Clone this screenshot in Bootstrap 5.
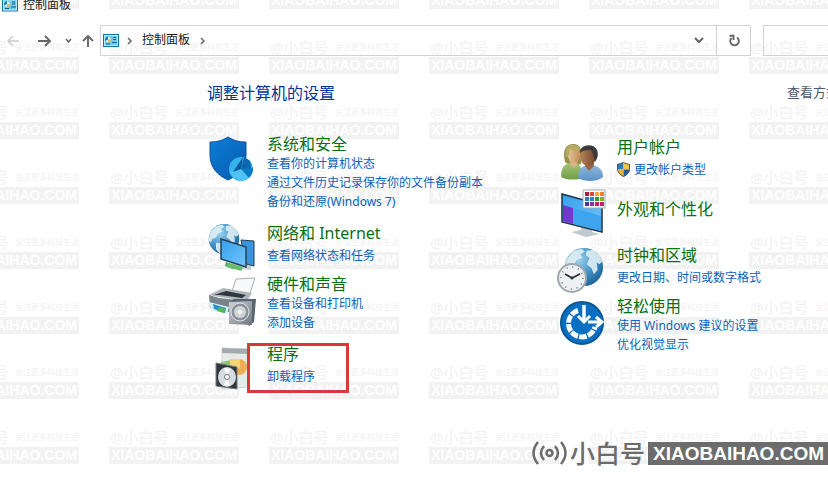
<!DOCTYPE html>
<html lang="zh-CN">
<head>
<meta charset="utf-8">
<meta name="viewport" content="width=device-width, initial-scale=1">
<title>控制面板</title>
<link rel="stylesheet" href="https://cdn.jsdelivr.net/npm/bootstrap@5.3.0/dist/css/bootstrap.min.css">
<style>
body { font: 12px/19px "Noto Sans", "Noto Sans CJK SC", sans-serif; color: #1a1a1a; background: #fff; min-height: 100vh; overflow-x: hidden; }
.page-shell { min-height: 100vh; isolation: isolate; }
.tile-layer { inset: 0; z-index: -1; display: grid; grid-template-columns: repeat(6, 160px); grid-auto-rows: 65px; margin: -28px 0 0 -51px; pointer-events: none; }
.tile-top { height: 20px; line-height: 20px; width: 130px; color: #f3f3f3; white-space: nowrap; font-weight: 500; padding-left: 1px; }
.tile-top b { font-size: 15px; font-weight: 500; }
.tile-top span { font-size: 8px; }
.tile-bar { width: 130px; height: 17px; background: #f2f2f2; color: #fff; font: 700 14px/17px "Liberation Sans", sans-serif; text-align: center; }
.title-bar { height: 9px; margin-bottom: 16px; padding-left: 2px; gap: 5px; }
.tool-row { height: 31px; }
.nav-set { width: 100px; padding: 0 6px; }
.plain-btn { border: 0; background: none; padding: 0; color: #666; line-height: 0; }
.plain-btn:disabled { color: #ccc; }
.address { border: 1px solid #d2d2d2; padding-left: 2px; }
.crumb { color: #1a1a1a; line-height: 19px; padding: 0 10px 2px; }
.reload { width: 34px; border-left: 1px solid #d2d2d2; }
.find-box { width: 65px; border: 1px solid #d2d2d2; border-right: 0; margin-left: 12px; background: none; border-radius: 0; }
.content-pad { padding-left: 25%; }
.page-head { height: 24px; margin-top: 25px; margin-bottom: 30px; line-height: 24px; }
.page-head h1 { font-size: 16px; line-height: 24px; color: #003399; }
.view-by { width: 41px; font-size: 13px; line-height: 22px; color: #4b5a6c; overflow: hidden; white-space: nowrap; }
.cats { display: grid; grid-template-columns: 350px 1fr; }
.cat { gap: 10px; margin-bottom: 3px; }
.cat.tall { margin-bottom: 13px; }
.cat > svg { width: 50px; height: 48px; flex: none; }
.cat h2 { font-size: 16px; line-height: 19px; margin: 0; white-space: nowrap; }
.cat h2 a { color: #0b7010; }
.cat a { text-decoration: none; color: #0b62b8; white-space: nowrap; }
.single h2 { margin-bottom: 3px; }
.second-col { padding-top: 3px; }
.look { margin-bottom: 9px; }
.focus-frame { left: 40px; top: -2px; width: 102px; height: 50px; border: 3px solid #d9383c; pointer-events: none; }
.brand { right: 0; bottom: 12px; color: #6c6c6c; }
.brand-cn { font-size: 25px; line-height: 23px; font-weight: 500; margin: 0 3px 0 3px; }
.brand-url { background: #6c6c6c; color: #fff; font: 700 19px/23px "Liberation Sans", sans-serif; padding: 0 4px 0 5px; }
</style>
<script src="https://cdn.jsdelivr.net/npm/bootstrap@5.3.0/dist/js/bootstrap.bundle.min.js"></script>
</head>
<body>
<svg width="0" height="0" class="position-absolute" aria-hidden="true">
  <defs>
    <linearGradient id="blue" x1="0" y1="0" x2="1" y2="1"><stop stop-color="#0b80d8"/><stop offset="1" stop-color="#0757ae"/></linearGradient>
    <linearGradient id="sky" x1="0" y1="0" x2="1" y2="1"><stop stop-color="#36a0ee"/><stop offset="1" stop-color="#72c5fa"/></linearGradient>
    <radialGradient id="ball" cx=".35" cy=".3" r=".8"><stop stop-color="#9fd3ef"/><stop offset=".55" stop-color="#4292c5"/><stop offset="1" stop-color="#175b91"/></radialGradient>
    <linearGradient id="metal" x1="0" y1="0" x2="1" y2="1"><stop stop-color="#d0d4d8"/><stop offset="1" stop-color="#6e757d"/></linearGradient>
    <linearGradient id="skin" x1="0" y1="0" x2="1" y2="0"><stop stop-color="#e9c596"/><stop offset="1" stop-color="#c38c5c"/></linearGradient>
    <linearGradient id="face" x1="0" y1="0" x2="1" y2="0"><stop stop-color="#b98257"/><stop offset="1" stop-color="#6d4630"/></linearGradient>
    <linearGradient id="shirt" x1="0" y1="0" x2="0" y2="1"><stop stop-color="#8db9df"/><stop offset="1" stop-color="#5d92c6"/></linearGradient>
    <linearGradient id="green" x1="0" y1="0" x2="0" y2="1"><stop stop-color="#a5c477"/><stop offset="1" stop-color="#6f9f45"/></linearGradient>
    <symbol id="panel" viewBox="0 0 16 13"><rect x=".5" y=".5" width="15" height="12" fill="#6fc8ee" stroke="#16729f"/><rect x="1.5" y="1.5" width="13" height="10" fill="none" stroke="#b9e7fa"/><circle cx="5" cy="5.500" r="2.700" fill="#e9f7fb"/><path d="M5 5.500V2.500A3 3 0 0 0 2.500 7z" fill="#167aad"/><path d="M5 5.500h3A3 3 0 0 1 5 8.500z" fill="#e3b54d"/><path d="M10 3.500h3M10 5.500h3M9 8.500h5M3 10h4" stroke="#175f88"/></symbol>
    <symbol id="globe" viewBox="0 0 44 44"><circle cx="22" cy="22" r="21" fill="url(#ball)"/><path d="M4 12L10 5l9-3 4 3-5 3 2 4-6 2-3 6-5 2-2 5-3-3 1-7zM25 4l7-1 7 6 3 7-3 3-3-2 1 8-4 5-3-7-5-4 3-7-4-3zM11 27l7 1 4 5-4 5-2 4-5-6z" fill="#e3f0f5" opacity=".88"/></symbol>
  </defs>
</svg>
<div class="page-shell position-relative overflow-hidden">
  <div class="tile-layer position-absolute" id="tiles" aria-hidden="true"></div>

  <header>
    <div class="title-bar d-flex align-items-center">
      <svg class="flex-shrink-0" width="16" height="14"><use href="#panel"/></svg><span>控制面板</span>
    </div>
    <nav class="tool-row d-flex align-items-stretch" aria-label="导航">
      <div class="nav-set d-flex align-items-center justify-content-between flex-shrink-0">
        <button class="plain-btn" disabled aria-label="后退"><svg width="14" height="12" fill="none" stroke="currentColor" stroke-width="1.500"><path d="M13 6H2M7 1L2 6l5 5"/></svg></button>
        <button class="plain-btn ms-2" aria-label="前进"><svg width="14" height="12" fill="none" stroke="currentColor" stroke-width="1.900"><path d="M0 6h12M7 1l5 5-5 5"/></svg></button>
        <button class="plain-btn ms-1" aria-label="最近位置"><svg width="7" height="6" fill="none" stroke="currentColor" stroke-width="1.500"><path d="M1 1l2.500 3L6 1"/></svg></button>
        <button class="plain-btn" aria-label="上移"><svg width="12" height="13" fill="none" stroke="currentColor" stroke-width="1.900"><path d="M6 13V2M1 7l5-5 5 5"/></svg></button>
      </div>
      <div class="address d-flex align-items-center flex-grow-1">
        <svg width="16" height="13"><use href="#panel"/></svg>
        <button class="plain-btn ms-2" aria-label="展开"><svg width="5" height="8" fill="none" stroke="currentColor" stroke-width="1.500"><path d="M1 1l3 3-3 3"/></svg></button>
        <button class="plain-btn crumb">控制面板</button>
        <button class="plain-btn" aria-label="展开控制面板"><svg width="5" height="8" fill="none" stroke="currentColor" stroke-width="1.500"><path d="M1 1l3 3-3 3"/></svg></button>
        <button class="plain-btn ms-auto me-2 pe-1" aria-label="以前的位置"><svg width="10" height="7" fill="none" stroke="currentColor" stroke-width="2"><path d="M1 1l4 4 4-4"/></svg></button>
        <button class="plain-btn reload align-self-stretch" aria-label="刷新"><svg width="12" height="13" fill="none" stroke="currentColor" stroke-width="1.900"><path d="M9 3.500A4.300 4.300 0 1 1 3.500 4M1.500 1.800h4v4.200"/></svg></button>
      </div>
      <input class="find-box flex-shrink-0" type="search" aria-label="搜索控制面板">
    </nav>
  </header>

  <main class="content-pad">
    <div class="page-head d-flex justify-content-between">
      <h1 class="m-0 fw-normal">调整计算机的设置</h1>
      <div class="view-by">查看方式</div>
    </div>
    <div class="cats">
      <div>
        <section class="cat tall d-flex">
          <svg viewBox="0 0 50 48"><path d="M3 7c8 0 13-2 18-5 5 3 10 5 18 5v13c0 12-7 20-18 25C10 40 3 32 3 20z" fill="url(#blue)" stroke="#07549c"/><circle cx="34" cy="34" r="12" fill="#35b3ea"/><path d="M34 34l3-12 6 4 2 12z" fill="#0c67ae"/><path d="M34 34l12-1a12 12 0 0 1-6 11z" fill="#087bc4"/><path d="M23 36l11-2 8 9a12 12 0 0 1-19-7z" fill="#4fc3f3"/><path d="M34 34l-8 3 10-15z" fill="#0a5aa0"/></svg>
          <div><h2 class="fw-normal"><a href="#">系统和安全</a></h2><a class="d-block" href="#">查看你的计算机状态</a><a class="d-block" href="#">通过文件历史记录保存你的文件备份副本</a><a class="d-block" href="#">备份和还原(Windows 7)</a></div>
        </section>
        <section class="cat single d-flex">
          <svg viewBox="0 0 50 48"><use href="#globe" x="1" y="-1" width="32" height="32"/><path d="M24 39l20 3v4l-18-2z" fill="#c3cdd2"/><path d="M19 38l9 3-2 4-8-3z" fill="#3da75a"/><path d="M20 41l15 4" stroke="#62c06b" stroke-width="4"/><path d="M34 16l13 1v25l-8-2z" fill="#3796dd" stroke="#263d51"/><path d="M14 15l25 8v20l-25-8z" fill="url(#sky)" stroke="#24445b" stroke-width="1.500"/></svg>
          <div><h2 class="fw-normal"><a href="#">网络和 Internet</a></h2><a class="d-block" href="#">查看网络状态和任务</a></div>
        </section>
        <section class="cat tall d-flex">
          <svg class="overflow-visible" viewBox="0 0 50 48"><path d="M25 16L29 4l19-1-6 18z" fill="#f8f9fa" stroke="#a8adb4"/><path d="M2 20l14-7 29 5-5 8-28-4z" fill="#aeb5bc"/><path d="M2 20l10 3 28 3v15L3 33z" fill="#7b838a"/><path d="M7 20l12-4 20 4-4 3-22-3z" fill="#303840"/><path d="M2 27l20 5-2 7L4 35z" fill="#d6f0fa"/><path d="M6 29l13 4-1 5-11-4z" fill="#2594c8"/><path d="M12 32l7 2-2 4-7-2z" fill="#58b756"/><path d="M22 27l5-3h22l-2 23-5 4z" fill="#566473"/><path d="M22 27l23-1v24l-23-1z" fill="url(#metal)"/><ellipse cx="33" cy="37" rx="9" ry="9" fill="#8b9299" stroke="#dfe3e6"/><ellipse cx="33" cy="37" rx="6" ry="6" fill="#d1d5d8"/><circle cx="33" cy="37" r="2" fill="#f7f7f7"/></svg>
          <div><h2 class="fw-normal"><a href="#">硬件和声音</a></h2><a class="d-block" href="#">查看设备和打印机</a><a class="d-block" href="#">添加设备</a></div>
        </section>
        <section class="cat single d-flex position-relative">
          <svg viewBox="0 0 50 48"><path d="M15 3l27 1v38l-27 2z" fill="#e7eaeb" stroke="#d0d6d8"/><path d="M15 3l27 1v5l-27-1z" fill="#a5aaae"/><path d="M14 17l10-2 1 15H14z" fill="#91c576"/><circle cx="32" cy="22" r="8" fill="#efad54"/><path d="M23 14h10v9H23z" fill="#f2d477"/><path d="M9 18l21 4v22L9 41z" fill="#30373c" stroke="#737b80"/><ellipse cx="20" cy="32" rx="9" ry="10" fill="#d5dbde"/><path d="M20 32l-3-9 6 1zM20 32l3 9-6-1z" fill="#fff"/><circle cx="20" cy="32" r="2.500" fill="#fff" stroke="#71787c"/></svg>
          <div><h2 class="fw-normal"><a href="#">程序</a></h2><a class="d-block" href="#">卸载程序</a></div>
          <div class="focus-frame position-absolute" aria-hidden="true"></div>
        </section>
      </div>
      <div class="second-col">
        <section class="cat single d-flex">
          <svg viewBox="0 0 50 48"><path d="M8 24C5 12 9 6 16 6c8 0 10 6 8 20l-9 3z" fill="#96904a"/><ellipse cx="17" cy="17" rx="6" ry="9" fill="url(#skin)"/><path d="M9 20C7 10 11 6 17 7c4 0 6 3 6 6-5 0-8 0-10-2 0 4-1 7-4 9z" fill="#b5ab62"/><path d="M4 39c0-10 4-14 11-14 6 0 9 3 10 8l-2 8c-7 1-14 1-19-2z" fill="url(#green)"/><path d="M12 25l5 5 4-4-3-2z" fill="#dcb487"/><path d="M21 40c0-9 4-13 12-13 9 0 13 5 13 12-6 5-18 5-25 1z" fill="url(#shirt)"/><path d="M29 25h8v3l-5 5-4-5z" fill="#99663f"/><ellipse cx="31" cy="18" rx="8" ry="10" fill="url(#face)"/><path d="M23 15C22 7 36 4 40 12c2 5 0 9-2 12-1-5-2-9-4-12-4 0-8 0-11 3z" fill="#3d3b39"/></svg>
          <div><h2 class="fw-normal"><a href="#">用户帐户</a></h2><a class="d-flex align-items-center" href="#"><svg class="me-1" width="13" height="15" viewBox="0 0 14 16"><path d="M0 2q4 0 7-2v8H0z" fill="#287cc1"/><path d="M7 0q3 2 7 2v6H7z" fill="#f4c544"/><path d="M0 8h7v8Q1 13 0 8z" fill="#eeb432"/><path d="M7 8h7q-1 5-7 8z" fill="#205c9d"/><path d="M.5 2.500Q4 2 7 .5q3 1.500 6.500 2V8q-1 5-6.500 7.500Q1.500 13 .5 8z" fill="none" stroke="#4b5158"/></svg>更改帐户类型</a></div>
        </section>
        <section class="cat look d-flex align-items-center">
          <svg viewBox="0 0 50 48"><path d="M24 38l11 3v2l8 2-14 3-15-5 10-2z" fill="#bfc9ce"/><path d="M5 5l40 11v27L5 33z" fill="url(#sky)" stroke="#1d3444" stroke-width="1.500"/><path d="M6 16l10 3v16L6 32z" fill="#7438d0"/><path d="M16 19l28 8v15l-28-7z" fill="#3fa4ee"/><path d="M26 1h22v18H26z" fill="#fff" stroke="#a0abb1"/><path d="M28 3h4v4h-4z" fill="#b31945"/><path d="M33 3h4v4h-4z" fill="#d74b3f"/><path d="M38 3h4v4h-4z" fill="#f2ad39"/><path d="M43 3h4v4h-4z" fill="#e98327"/><path d="M28 8h4v4h-4z" fill="#2387a6"/><path d="M33 8h4v4h-4z" fill="#1e8ac5"/><path d="M38 8h4v4h-4z" fill="#389641"/><path d="M43 8h4v4h-4z" fill="#78b72b"/><path d="M28 13h4v4h-4z" fill="#54309b"/><path d="M33 13h4v4h-4z" fill="#8a3299"/><path d="M38 13h4v4h-4zM43 13h4v4h-4z" fill="#c52065"/></svg>
          <div class="pb-2"><h2 class="fw-normal m-0"><a href="#">外观和个性化</a></h2></div>
        </section>
        <section class="cat single d-flex">
          <svg viewBox="0 0 50 48"><use href="#globe" x="7" y="1" width="40" height="40"/><circle cx="15" cy="32" r="14" fill="#eef1f3" stroke="#a0a7ad" stroke-width="2"/><circle cx="15" cy="32" r="11" fill="none" stroke="#616c76" stroke-width="1.500" stroke-dasharray="1 4.760"/><path d="M8 28l7 4 8-4" fill="none" stroke="#26313c" stroke-width="1.700"/><circle cx="15" cy="32" r="1.500" fill="#26313c"/></svg>
          <div><h2 class="fw-normal"><a href="#">时钟和区域</a></h2><a class="d-block" href="#">更改日期、时间或数字格式</a></div>
        </section>
        <section class="cat tall d-flex">
          <svg viewBox="0 0 50 48"><circle cx="25" cy="26" r="21" fill="#0870c2" stroke="#075795" stroke-width="2"/><path d="M21 13.500A13.500 13.500 0 1 0 38 30" fill="none" stroke="#fff" stroke-width="5" stroke-dasharray="7.500 1.300"/><path d="M27 8v16" stroke="#fff" stroke-width="3.500"/><path d="M21 19l6 6 6-6M31 25h13M39 20l6 5-6 5" fill="none" stroke="#fff" stroke-width="3"/></svg>
          <div><h2 class="fw-normal"><a href="#">轻松使用</a></h2><a class="d-block" href="#">使用 Windows 建议的设置</a><a class="d-block" href="#">优化视觉显示</a></div>
        </section>
      </div>
    </div>
  </main>

  <div class="brand position-absolute d-flex align-items-center">
    <svg width="35" height="24" viewBox="0 0 35 24" fill="none" stroke="currentColor" stroke-width="2.500"><circle cx="17.500" cy="12" r="3"/><path d="M12 5q-6 7 0 14M23 5q6 7 0 14M6 1q-9 11 0 22M29 1q9 11 0 22"/></svg>
    <span class="brand-cn">小白号</span><span class="brand-url">XIAOBAIHAO.COM</span>
  </div>
</div>
<script>
  // Repeats the background label over the whole page area.
  const layer = document.getElementById('tiles');
  for (let i = 0; i < 48; i++) {
    const tile = document.createElement('div');
    tile.innerHTML = '<div class="tile-top d-flex justify-content-between align-items-center"><b>@小白号</b><span>关注更多科技生活</span></div><div class="tile-bar">XIAOBAIHAO.COM</div>';
    layer.append(tile);
  }
</script>
</body>
</html>
